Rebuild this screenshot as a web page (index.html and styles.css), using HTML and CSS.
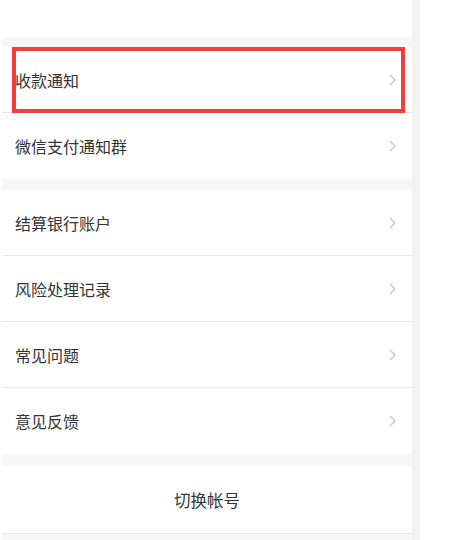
FILE: index.html
```html
<!DOCTYPE html>
<html lang="zh-CN">
<head>
  <meta charset="UTF-8">
  <title>设置</title>
  <link rel="stylesheet" href="styles.css">
</head>
<body>
  <div class="page">
    <div class="phone">
      <div class="header"></div>

      <div class="group first">
        <div class="row marked">
          <span>收款通知</span>
          <svg class="arrow" width="7" height="12" viewBox="0 0 7 12"><polyline points="1,1 6,6 1,11" /></svg>
          <div class="mark"></div>
        </div>
        <div class="row">
          <span>微信支付通知群</span>
          <svg class="arrow" width="7" height="12" viewBox="0 0 7 12"><polyline points="1,1 6,6 1,11" /></svg>
        </div>
      </div>

      <div class="group second">
        <div class="row">
          <span>结算银行账户</span>
          <svg class="arrow" width="7" height="12" viewBox="0 0 7 12"><polyline points="1,1 6,6 1,11" /></svg>
        </div>
        <div class="row">
          <span>风险处理记录</span>
          <svg class="arrow" width="7" height="12" viewBox="0 0 7 12"><polyline points="1,1 6,6 1,11" /></svg>
        </div>
        <div class="row">
          <span>常见问题</span>
          <svg class="arrow" width="7" height="12" viewBox="0 0 7 12"><polyline points="1,1 6,6 1,11" /></svg>
        </div>
        <div class="row">
          <span>意见反馈</span>
          <svg class="arrow" width="7" height="12" viewBox="0 0 7 12"><polyline points="1,1 6,6 1,11" /></svg>
        </div>
      </div>

      <div class="group third">
        <div class="button-row">切换帐号</div>
      </div>
    </div>
    <div class="edge"></div>
  </div>
</body>
</html>
```

FILE: styles.css
```css
body {
  margin: 0;
  background: #fff;
  font-family: "Noto Sans CJK SC", "Liberation Sans", sans-serif;
  color: #333;
}

.page {
  display: flex;
  height: 540px;
  overflow: hidden;
}

.phone {
  width: 410px;
  margin-left: 2px;
  background: #f7f7f7;
}

.edge {
  width: 8px;
  background: #f2f2f2;
}

.header {
  height: 37px;
  background: #fff;
}

.group {
  background: #fff;
}

.group.first {
  margin-top: 10px;
}

.group.second {
  margin-top: 11px;
}

.group.third {
  margin-top: 12px;
}

.row {
  position: relative;
  height: 65px;
  display: flex;
  align-items: center;
  justify-content: space-between;
  padding: 0 16px 0 13px;
  font-size: 16px;
  border-bottom: 1px solid #e8e8e8;
}

.group .row:last-child {
  border-bottom: none;
  height: 66px;
}

.arrow {
  fill: none;
  stroke: #c8c8c8;
  stroke-width: 1.4;
}

.mark {
  position: absolute;
  top: 0;
  left: 10px;
  right: 7px;
  bottom: -1px;
  border: 4px solid #f53d3d;
}

.button-row {
  height: 67px;
  display: flex;
  align-items: center;
  justify-content: center;
  font-size: 16.5px;
  border-bottom: 1px solid #e8e8e8;
}
```
